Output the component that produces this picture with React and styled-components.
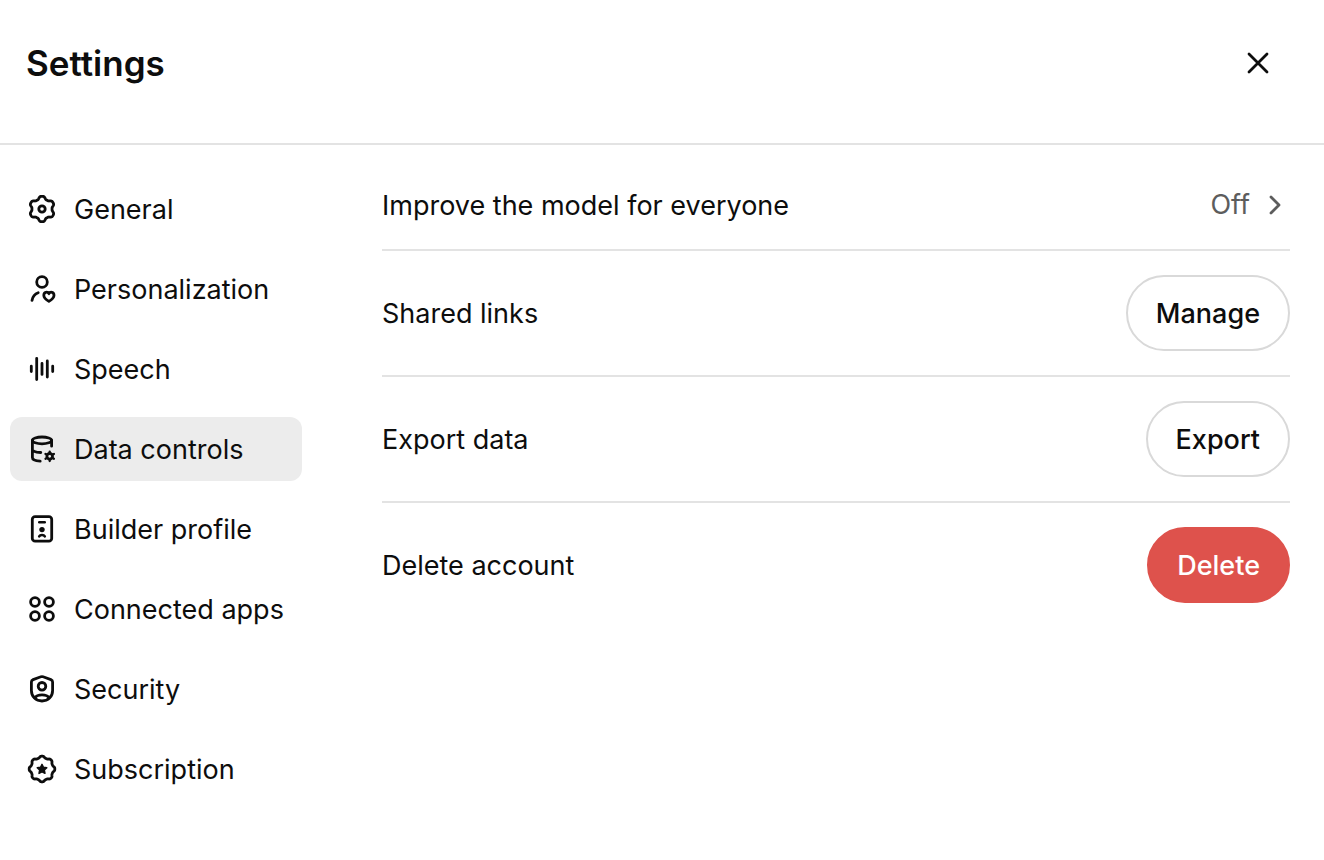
import React, { useState } from "react";
import styled, { createGlobalStyle } from "styled-components";

const GlobalStyle = createGlobalStyle`
  body {
    margin: 0;
    background: #fff;
    color: #0d0d0d;
    font-family: Inter, "Liberation Sans", sans-serif;
    font-size: 27px;
    line-height: 40px;
  }

  button {
    font: inherit;
    color: inherit;
    cursor: pointer;
  }
`;

const Header = styled.header`
  display: flex;
  align-items: center;
  justify-content: space-between;
  padding: 31px 34px 48px 26px;
  border-bottom: 2px solid #e3e3e3;
`;

const Title = styled.h1`
  margin: 0;
  font-size: 35px;
  line-height: 64px;
  font-weight: 600;
`;

const CloseButton = styled.button`
  display: flex;
  align-items: center;
  justify-content: center;
  width: 64px;
  height: 64px;
  padding: 0;
  border: 0;
  border-radius: 12px;
  background: none;
`;

const Layout = styled.div`
  display: flex;
  align-items: flex-start;
`;

const Nav = styled.nav`
  display: flex;
  flex-direction: column;
  box-sizing: border-box;
  flex: 0 0 312px;
  gap: 16px;
  padding: 32px 10px;
`;

const NavItem = styled.a`
  display: flex;
  align-items: center;
  gap: 16px;
  padding: 12px 16px;
  border-radius: 12px;
  background: ${(props) => (props.$active ? "#ececec" : "none")};
  color: inherit;
  text-decoration: none;
  white-space: nowrap;
`;

const Label = styled.span`
  padding-top: 2px;
  line-height: 38px;
`;

const IconSvg = styled.svg`
  flex: none;
  fill: none;
  stroke: currentColor;
  stroke-width: 2.8;
  stroke-linecap: round;
  stroke-linejoin: round;
`;

const Panel = styled.main`
  flex: 1;
  min-width: 0;
  padding: 16px 34px 32px 70px;
`;

const Row = styled.div`
  display: flex;
  align-items: center;
  justify-content: space-between;
  padding: 24px 0;
  border-bottom: 2px solid #e3e3e3;

  &:last-child {
    border-bottom: 0;
  }
`;

const ValueButton = styled.button`
  display: flex;
  align-items: center;
  gap: 8px;
  padding: 0;
  border: 0;
  background: none;
  color: #5d5d5d;
`;

const PillButton = styled.button`
  padding: 17px 28px 15px;
  border: 2px solid ${(props) => (props.$danger ? "#de524c" : "#d9d9d9")};
  border-radius: 38px;
  background: ${(props) => (props.$danger ? "#de524c" : "#fff")};
  color: ${(props) => (props.$danger ? "#fff" : "#0d0d0d")};
  font-weight: 500;
`;

// closed outline with blunt lobes spread evenly around the centre
const lobedPath = (lobes, radius, depth) => {
  const points = [];
  for (let i = 0; i < 192; i++) {
    const angle = (i / 192) * Math.PI * 2;
    const wave = Math.cos(lobes * angle) - 0.12 * Math.cos(3 * lobes * angle);
    const r = radius + depth * wave;
    const x = 16 + r * Math.sin(angle);
    const y = 16 - r * Math.cos(angle);
    points.push(`${x.toFixed(2)} ${y.toFixed(2)}`);
  }
  return `M${points.join("L")}Z`;
};

const Icon = ({ children }) => (
  <IconSvg width="32" height="32" viewBox="0 0 32 32" aria-hidden="true">
    {children}
  </IconSvg>
);

const GearIcon = () => (
  <Icon>
    <path d={lobedPath(6, 11.4, 1.5)} />
    <circle cx="16" cy="16" r="3.2" />
  </Icon>
);

const PersonHeartIcon = () => (
  <Icon>
    <circle cx="16" cy="9" r="5.3" />
    <path d="M6 27.4C6.7 23.6 8.8 21 12.2 19.8" />
    <path d="M22.9 28.4C19.8 26.6 17.8 24.6 17.8 22.3C17.8 19 21.5 18.1 22.9 20.7C24.3 18.1 28 19 28 22.3C28 24.6 26 26.6 22.9 28.4Z" />
  </Icon>
);

const WaveIcon = () => (
  <Icon>
    <path d="M5.3 13.2V18.6M10.7 5.3V26.6M16 10.4V21.4M21.3 8V24M26.7 13.2V18.6" />
  </Icon>
);

const DatabaseIcon = () => (
  <Icon>
    <ellipse cx="16" cy="7.4" rx="9.6" ry="3.4" />
    <path d="M6.4 7.4V24.4C6.4 26.4 9.4 27.8 14.2 28.1M6.4 16.4C6.4 18 9.4 19.2 14.8 19.5M25.6 7.4V13.2" />
    <circle cx="23.7" cy="23.3" r="2.8" strokeWidth="2.8" />
    <path
      d="M23.7 20V18.6M23.7 26.6V28M20.8 21.6L19.5 20.9M26.6 21.6L27.9 20.9M20.8 25L19.5 25.7M26.6 25L27.9 25.7"
      strokeWidth="2.3"
    />
  </Icon>
);

const BadgeIcon = () => (
  <Icon>
    <rect x="6.3" y="3.7" width="19.4" height="24.5" rx="2.8" />
    <path d="M13.2 9.2H18.8" strokeWidth="2.4" />
    <circle cx="16" cy="16.6" r="2.7" fill="currentColor" stroke="none" />
    <path d="M13.2 23.3C14.2 21.5 17.8 21.5 18.8 23.3" strokeWidth="2.6" />
  </Icon>
);

const AppsIcon = () => (
  <Icon>
    <circle cx="9" cy="9" r="4.4" />
    <circle cx="23" cy="9" r="4.4" />
    <circle cx="9" cy="23" r="4.4" />
    <circle cx="23" cy="23" r="4.4" />
  </Icon>
);

const ShieldIcon = () => (
  <Icon>
    <path d="M14.9 3.8Q16 3.4 17.1 3.8L24.9 6.6Q26.6 7.3 26.6 9V17.4C26.6 23.8 22 28 16 28C10 28 5.4 23.8 5.4 17.4V9Q5.4 7.3 7.1 6.6Z" />
    <circle cx="16" cy="13.3" r="3.8" />
    <path d="M9 24.8C11.2 21 20.8 21 23 24.8" />
  </Icon>
);

const StarBadgeIcon = () => (
  <Icon>
    <path d={lobedPath(8, 12, 0.9)} />
    <path
      d="M16 11.3L17.5 14.3L20.8 14.8L18.4 17.1L19 20.4L16 18.8L13 20.4L13.6 17.1L11.2 14.8L14.5 14.3Z"
      fill="currentColor"
      strokeWidth="1.4"
    />
  </Icon>
);

const CloseIcon = () => (
  <Icon>
    <path d="M7 7L25 25M25 7L7 25" />
  </Icon>
);

const ChevronIcon = () => (
  <Icon>
    <path d="M13 8L21 16L13 24" />
  </Icon>
);

// DATA
const sections = [
  { id: "general", label: "General", icon: GearIcon },
  { id: "personalization", label: "Personalization", icon: PersonHeartIcon },
  { id: "speech", label: "Speech", icon: WaveIcon },
  { id: "data-controls", label: "Data controls", icon: DatabaseIcon },
  { id: "builder-profile", label: "Builder profile", icon: BadgeIcon },
  { id: "connected-apps", label: "Connected apps", icon: AppsIcon },
  { id: "security", label: "Security", icon: ShieldIcon },
  { id: "subscription", label: "Subscription", icon: StarBadgeIcon },
];

const actions = [
  { id: "shared-links", label: "Shared links", button: "Manage" },
  { id: "export-data", label: "Export data", button: "Export" },
  { id: "delete-account", label: "Delete account", button: "Delete", danger: true },
];

const App = () => {
  const [active, setActive] = useState("data-controls");

  return (
    <>
      <GlobalStyle />
      <Header>
        <Title>Settings</Title>
        <CloseButton aria-label="Close">
          <CloseIcon />
        </CloseButton>
      </Header>
      <Layout>
        <Nav>
          {sections.map(({ id, label, icon: SectionIcon }) => (
            <NavItem
              key={id}
              href={`#${id}`}
              $active={id === active}
              aria-current={id === active ? "page" : undefined}
              onClick={() => setActive(id)}
            >
              <SectionIcon />
              <Label>{label}</Label>
            </NavItem>
          ))}
        </Nav>
        <Panel>
          <Row>
            <Label id="improve-model-label">Improve the model for everyone</Label>
            <ValueButton aria-describedby="improve-model-label">
              Off
              <ChevronIcon />
            </ValueButton>
          </Row>
          {actions.map((action) => (
            <Row key={action.id}>
              <Label id={`${action.id}-label`}>{action.label}</Label>
              <PillButton $danger={action.danger} aria-describedby={`${action.id}-label`}>
                {action.button}
              </PillButton>
            </Row>
          ))}
        </Panel>
      </Layout>
    </>
  );
};

export default App;
